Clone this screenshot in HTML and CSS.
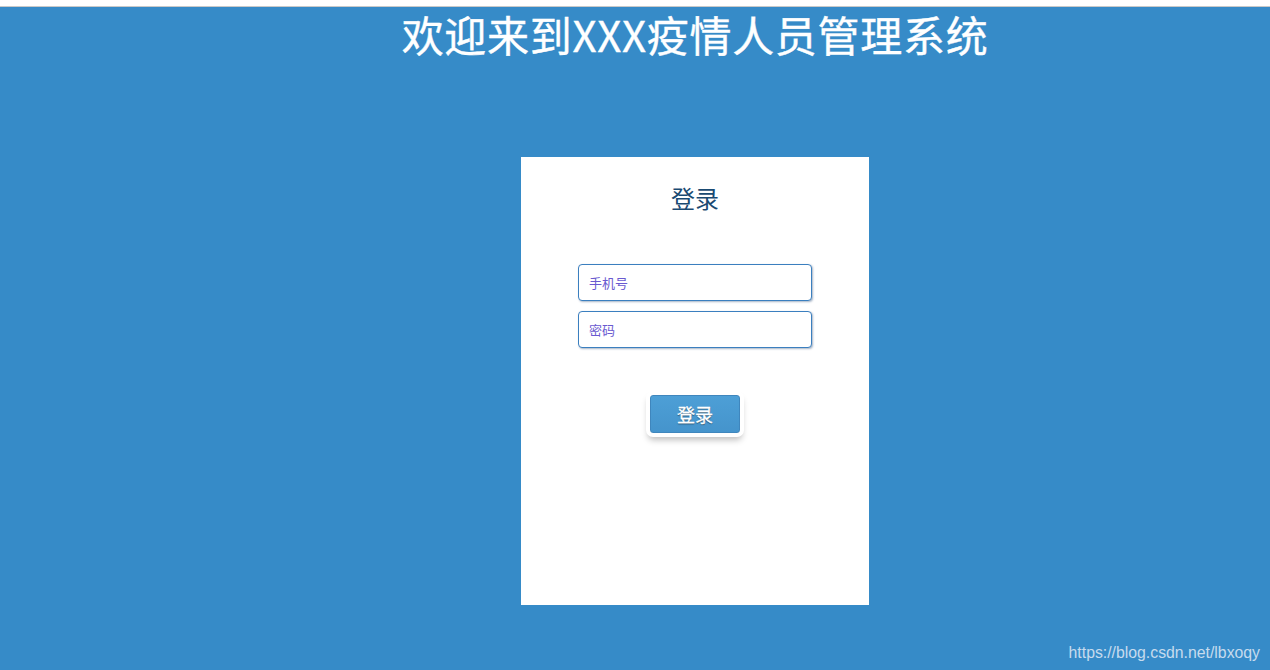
FILE: index.html
```html
<!DOCTYPE html>
<html lang="zh-CN">
<head>
<meta charset="utf-8">
<title>登录</title>
<link rel="stylesheet" href="styles.css">
</head>
<body>
<div class="topbar"></div>
<div class="page">
  <h1 class="title">欢迎来到XXX疫情人员管理系统</h1>
  <div class="card">
    <h2 class="card-title">登录</h2>
    <form class="form">
      <input class="field" type="text" placeholder="手机号">
      <input class="field" type="password" placeholder="密码">
      <button class="btn" type="button">登录</button>
    </form>
  </div>
  <div class="watermark">https://blog.csdn.net/lbxoqy</div>
</div>
</body>
</html>
```
FILE: styles.css
```css
html, body {
  margin: 0;
  padding: 0;
  height: 100%;
}
body {
  background: #368bc8;
  font-family: "Noto Sans CJK SC", "Liberation Sans", sans-serif;
  overflow: hidden;
}
.topbar {
  height: 6px;
  background: #ffffff;
  border-bottom: 1px solid #c9c9c9;
}
.page {
  height: 663px;
  display: flex;
  flex-direction: column;
  align-items: center;
  padding-left: 120px;
  box-sizing: border-box;
  position: relative;
}
.title {
  margin: 1px 0 0;
  font-size: 42px;
  font-weight: normal;
  line-height: 52px;
  color: #ffffff;
  letter-spacing: 0.7px;
  -webkit-text-stroke: 0.4px #ffffff;
}
.card {
  margin-top: 97px;
  width: 348px;
  height: 448px;
  background: #ffffff;
  display: flex;
  flex-direction: column;
  align-items: center;
}
.card-title {
  margin: 23px 0 0;
  font-size: 24px;
  font-weight: normal;
  line-height: 36px;
  color: #1a4a72;
}
.form {
  margin-top: 48px;
  display: flex;
  flex-direction: column;
  align-items: center;
  gap: 10px;
}
.field {
  width: 234px;
  height: 37px;
  box-sizing: border-box;
  border: 1px solid #3b7fbf;
  border-radius: 4px;
  box-shadow: 1px 1px 2px rgba(60, 90, 130, 0.45);
  padding: 0 10px;
  font-family: "Noto Sans CJK SC", sans-serif;
  font-size: 13px;
  outline: none;
}
.field::placeholder {
  color: #6a5ad0;
}
.btn {
  margin-top: 37px;
  width: 90px;
  height: 38px;
  border: 1px solid #3f86bd;
  border-radius: 3px;
  background: linear-gradient(#4d9fd6, #4594cc);
  color: #ffffff;
  font-family: "Noto Sans CJK SC", sans-serif;
  font-size: 18px;
  text-shadow: 0 1px 1px rgba(0, 0, 0, 0.55);
  -webkit-text-stroke: 0.3px #ffffff;
  box-shadow: 0 0 0 4px #ffffff, 0 5px 6px 2px rgba(0, 0, 0, 0.25);
  cursor: pointer;
}
.watermark {
  position: absolute;
  right: 10px;
  bottom: 8px;
  font-family: "Liberation Sans", sans-serif;
  font-size: 15.8px;
  color: #c6dbee;
}
```
